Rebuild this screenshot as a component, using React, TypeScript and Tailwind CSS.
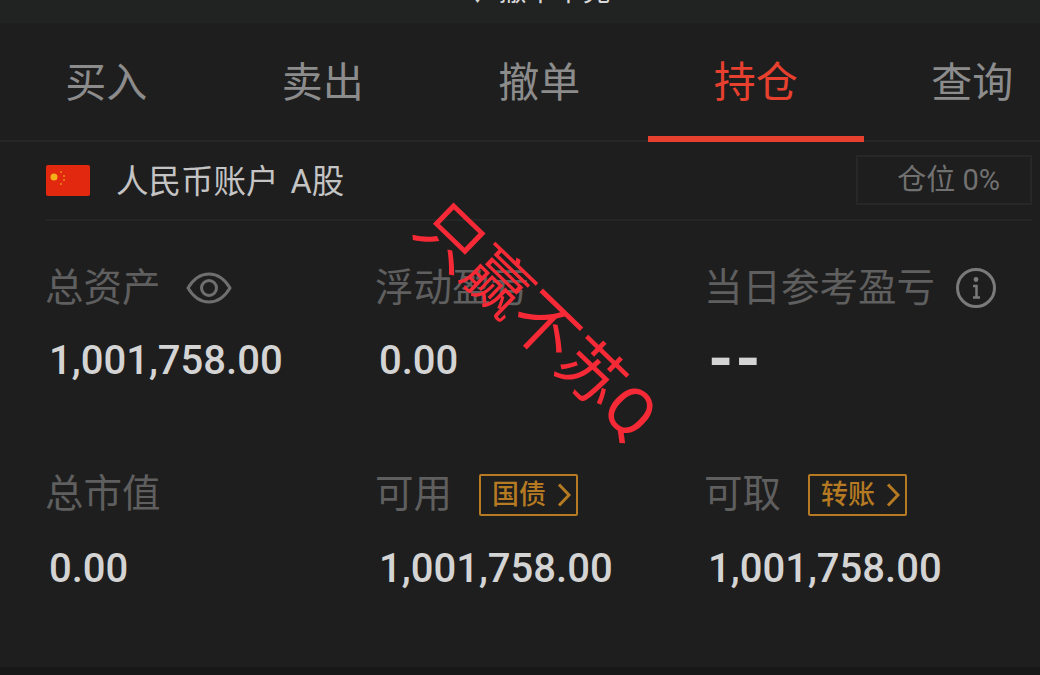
import React from 'react';

const cjk = "font-['Roboto','Noto_Sans_CJK_SC',sans-serif]";

const tabs = ['买入', '卖出', '撤单', '持仓', '查询'];

const Eye = () => (
  <svg width="46" height="36" viewBox="0 0 46 36" fill="none" stroke="#6f6f6f" strokeWidth="3">
    <path d="M2 18C8 8 15 4 23 4s15 4 21 14c-6 10-13 14-21 14S8 28 2 18Z" />
    <circle cx="23" cy="18" r="7.5" />
  </svg>
);

const Info = () => (
  <svg width="42" height="42" viewBox="0 0 42 42" fill="none" stroke="#7a7a7a">
    <circle cx="21" cy="21" r="18.5" strokeWidth="3" />
    <circle cx="21" cy="12.5" r="2.4" fill="#7a7a7a" stroke="none" />
    <path d="M18 19h3.5v11M18 30.500h7" strokeWidth="2.500" />
  </svg>
);

const Flag = () => (
  <svg width="44" height="31" viewBox="0 0 44 31">
    <rect width="44" height="31" rx="2" fill="#e2290f" />
    <circle cx="8" cy="12" r="3.500" fill="#f3b019" />
    <circle cx="15" cy="7" r="1" fill="#eb8a18" />
    <circle cx="18" cy="11" r="1" fill="#eb8a18" />
    <circle cx="18" cy="15" r="1" fill="#eb8a18" />
    <circle cx="15" cy="19" r="1" fill="#eb8a18" />
  </svg>
);

const Tag = ({ label }: { label: string }) => (
  <span className="mt-[2px] flex h-[42px] w-[99px] items-center justify-between rounded-[2px] border-[2.500px] border-[#b57a22] pl-[11px] pr-[5px] text-[27px] font-medium leading-none text-[#b57a22]">
    {label}
    <svg width="14" height="24" viewBox="0 0 14 24" fill="none" stroke="#b57a22" strokeWidth="3">
      <path d="M2 1.500 12 12 2 22.500" />
    </svg>
  </span>
);

const Cell = ({
  label,
  value,
  extra,
  gap,
  dashed,
  valueGap,
}: {
  label: string;
  value: string;
  extra?: React.ReactNode;
  gap?: string;
  dashed?: boolean;
  valueGap?: string;
}) => (
  <div className="flex flex-col">
    <div className={`flex h-[44px] items-center whitespace-nowrap text-[38.500px] leading-none text-[#5f5f5f] ${gap ?? 'gap-[27px]'}`}>
      <span>{label}</span>
      {extra}
    </div>
    <div
      className={`${valueGap ?? 'mt-[28px]'} leading-[46px] text-[#d4d4d4] ${
        dashed
          ? "-ml-[2px] font-['Liberation_Mono',monospace] text-[62px] font-bold tracking-[-10px]"
          : 'pl-[4px] text-[40px] font-medium'
      }`}
    >
      {value}
    </div>
  </div>
);

export default function App() {
  return (
    <div className={`relative h-[675px] w-[1040px] overflow-hidden bg-[#1e1e1e] ${cjk}`}>
      <div className="flex h-[23px] items-end justify-center overflow-hidden bg-[#212222]">
        <span className="ml-[34px] -translate-y-[17px] text-[28px] leading-none text-[#d8d8d8]">↓ 撤单中兑</span>
      </div>

      <div className="-ml-[2px] flex h-[119px] w-[1044px] items-stretch border-b-2 border-[#272727]">
        {tabs.map((tab, i) => (
          <div
            key={tab}
            className={`-mb-[2px] flex w-[216.500px] shrink-0 items-center justify-center pt-[7px] leading-none ${
              i === 3
                ? 'border-b-[6px] border-[#e8402f] text-[42px] text-[#e8402f]'
                : 'border-b-[6px] border-transparent text-[41px] text-[#8c8c8c]'
            }`}
          >
            {tab}
          </div>
        ))}
      </div>

      <div className="ml-[46px] mr-[8px] flex h-[79px] items-center justify-between border-b-2 border-[#262626]">
        <div className="flex items-center gap-[26px]">
          <Flag />
          <span className="mt-[3px] text-[32.500px] leading-none text-[#c4c4c4] [word-spacing:4px]">人民币账户 A股</span>
        </div>
        <div className="mb-[1px] flex h-[50px] w-[176px] items-center justify-end border-2 border-[#272727] pr-[30px] text-[29px] leading-none text-[#717171]">
          仓位 0%
        </div>
      </div>

      <div className="ml-[45px] mt-[45px] grid grid-cols-[330px_329px_1fr]">
        <Cell label="总资产" value="1,001,758.00" gap="gap-[25px]" extra={<Eye />} />
        <Cell label="浮动盈亏" value="0.00" />
        <Cell label="当日参考盈亏" value="--" gap="gap-[20px]" dashed extra={<Info />} />
      </div>

      <div className="ml-[45px] mt-[88px] grid grid-cols-[330px_329px_1fr]">
        <Cell label="总市值" value="0.00" valueGap="mt-[30px]" />
        <Cell label="可用" value="1,001,758.00" valueGap="mt-[30px]" extra={<Tag label="国债" />} />
        <Cell label="可取" value="1,001,758.00" valueGap="mt-[30px]" extra={<Tag label="转账" />} />
      </div>

      <div className="absolute bottom-0 left-0 h-[8px] w-full bg-[#181818]" />

      <div className="absolute left-[383px] top-[291px] w-[310px] rotate-[44deg] whitespace-nowrap text-[65px] font-normal leading-none text-[#f52a36]">
        只赢不苏Q
      </div>
    </div>
  );
}
